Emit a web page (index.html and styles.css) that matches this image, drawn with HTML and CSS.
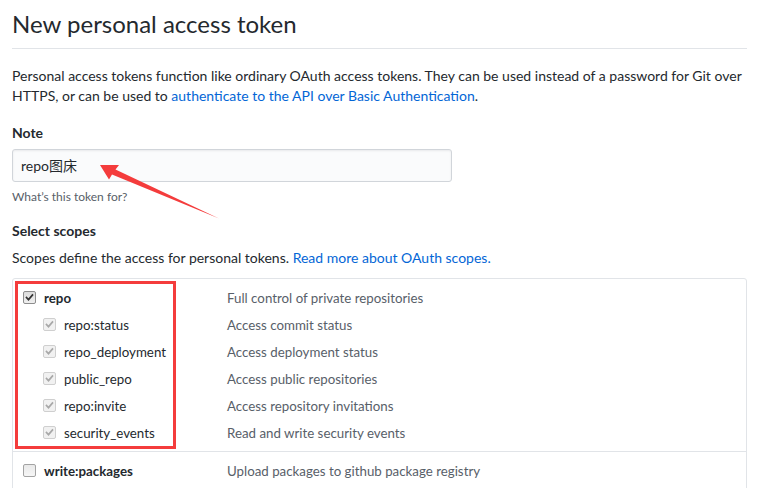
FILE: index.html
```html
<!DOCTYPE html>
<html lang="en">
<head>
<meta charset="utf-8">
<title>New personal access token</title>
<link rel="stylesheet" href="styles.css">
</head>
<body>
<div class="page">
  <div class="subhead">
    <h2 class="subhead-heading">New personal access token</h2>
  </div>
  <p class="intro">Personal access tokens function like ordinary OAuth access tokens. They can be used instead of a password for Git over HTTPS, or can be used to <a href="#">authenticate to the API over Basic Authentication</a>.</p>

  <div class="form-group">
    <label class="label">Note</label>
    <div class="input">repo图床</div>
    <p class="note">What’s this token for?</p>
  </div>

  <div class="form-group scopes-group">
    <div class="label">Select scopes</div>
    <p class="scopes-desc">Scopes define the access for personal tokens. <a href="#">Read more about OAuth scopes.</a></p>

    <div class="scope-box">
      <div class="scope-group">
        <div class="row">
          <span class="cb checked"><svg viewBox="0 0 13 13"><path d="M3 6.5 L5.3 9 L10 3.6" /></svg></span>
          <span class="scope-name strong">repo</span>
          <span class="scope-desc">Full control of private repositories</span>
        </div>
        <div class="row child">
          <span class="cb disabled"><svg viewBox="0 0 13 13"><path d="M3 6.5 L5.3 9 L10 3.6" /></svg></span>
          <span class="scope-name">repo:status</span>
          <span class="scope-desc">Access commit status</span>
        </div>
        <div class="row child">
          <span class="cb disabled"><svg viewBox="0 0 13 13"><path d="M3 6.5 L5.3 9 L10 3.6" /></svg></span>
          <span class="scope-name">repo_deployment</span>
          <span class="scope-desc">Access deployment status</span>
        </div>
        <div class="row child">
          <span class="cb disabled"><svg viewBox="0 0 13 13"><path d="M3 6.5 L5.3 9 L10 3.6" /></svg></span>
          <span class="scope-name">public_repo</span>
          <span class="scope-desc">Access public repositories</span>
        </div>
        <div class="row child">
          <span class="cb disabled"><svg viewBox="0 0 13 13"><path d="M3 6.5 L5.3 9 L10 3.6" /></svg></span>
          <span class="scope-name">repo:invite</span>
          <span class="scope-desc">Access repository invitations</span>
        </div>
        <div class="row child">
          <span class="cb disabled"><svg viewBox="0 0 13 13"><path d="M3 6.5 L5.3 9 L10 3.6" /></svg></span>
          <span class="scope-name">security_events</span>
          <span class="scope-desc">Read and write security events</span>
        </div>
      </div>
      <div class="scope-group">
        <div class="row">
          <span class="cb"></span>
          <span class="scope-name strong">write:packages</span>
          <span class="scope-desc">Upload packages to github package registry</span>
        </div>
      </div>
    </div>
  </div>
</div>

<div class="annot-rect"></div>
<svg class="annot-arrow" width="774" height="488" viewBox="0 0 774 488">
  <polygon points="100,165 119,165 115.5,169.5 219,218.5 112,174.5 109,179.5" fill="#f43c3c"/>
</svg>
</body>
</html>
```

FILE: styles.css
```css
* { box-sizing: border-box; }
html, body { margin: 0; padding: 0; background: #fff; }
body {
  font-family: "Segoe UI", Lato, "Noto Sans CJK SC", sans-serif;
  font-size: 14px;
  line-height: 20px;
  color: #24292e;
  overflow: hidden;
  width: 774px;
  height: 488px;
}
a { color: #0366d6; text-decoration: none; }

.page { padding: 0 27px 0 12px; }

.subhead {
  border-bottom: 1px solid #e1e4e8;
  padding-top: 6px;
  padding-bottom: 7px;
}
.subhead-heading {
  margin: 0;
  font-size: 24px;
  font-weight: 400;
  line-height: 35px;
}

.intro { margin: 17px 0 0; }

.form-group { margin-top: 17px; }
.label { display: block; font-weight: 700; line-height: 20px; }
.input {
  margin-top: 6px;
  width: 440px;
  height: 33px;
  padding: 6px 8px;
  border: 1px solid #d1d5da;
  border-radius: 3px;
  background: #fafbfc;
  box-shadow: inset 0 1px 2px rgba(27,31,35,.075);
  line-height: 20px;
}
.note { margin: 6px 0 0; font-size: 12px; color: #586069; line-height: 18px; }

.scopes-group { margin-top: 15px; }
.scopes-desc { margin: 7px 0 0; }

.scope-box {
  margin-top: 10px;
  border: 1px solid #e1e4e8;
  border-radius: 3px;
  height: 240px;
}
.scope-group { padding: 5px 0 5px; }
.scope-group + .scope-group { border-top: 1px solid #e1e4e8; padding-top: 5px; }

.row {
  display: flex;
  align-items: center;
  height: 27px;
  padding-left: 10px;
  font-size: 13.3px;
}
.row.child { padding-left: 30px; }
.scope-name { width: 191px; padding-left: 8px; }
.row.child .scope-name { width: 171px; padding-left: 8px; }
.strong { font-weight: 700; }
.scope-desc { color: #586069; }

.cb {
  width: 13px; height: 13px;
  flex: none;
  border: 1px solid #a3a3a3;
  border-radius: 2px;
  background: linear-gradient(#e9e9e9, #f6f6f6);
  display: flex;
}
.cb svg { width: 11px; height: 11px; }
.cb path { fill: none; stroke: #333; stroke-width: 2; stroke-linecap: square; }
.cb.disabled { border-color: #cfcfcf; background: #f1f1f1; }
.cb.disabled path { stroke: #a8a8a8; }
.cb.checked { border-color: #8d8d8d; background: linear-gradient(#dcdcdc, #efefef); }

.annot-rect {
  position: absolute;
  left: 15px; top: 281px;
  width: 161px; height: 168px;
  border: 3px solid #f43c3c;
}
.annot-arrow { position: absolute; left: 0; top: 0; pointer-events: none; }
```
